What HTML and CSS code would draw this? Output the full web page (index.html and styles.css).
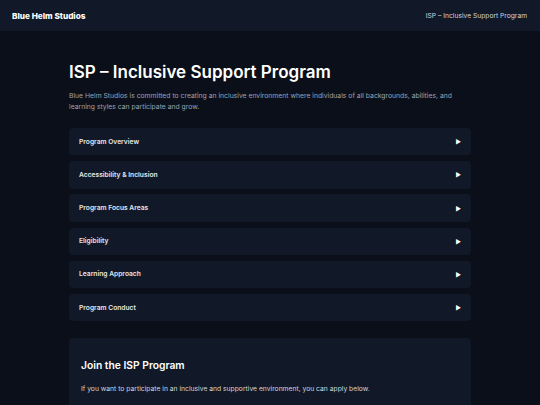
FILE: index.html
```html
<!DOCTYPE html>
<html lang="en">
<head>
  <meta charset="utf-8">
  <title>ISP – Inclusive Support Program</title>
  <link rel="stylesheet" href="styles.css">
</head>
<body>
  <header class="topbar">
    <span class="brand">Blue Helm Studios</span>
    <span class="topbar-title">ISP – Inclusive Support Program</span>
  </header>

  <main class="wrapper">
    <h1 class="page-title">ISP – Inclusive Support Program</h1>
    <p class="intro">Blue Helm Studios is committed to creating an inclusive environment where individuals of all backgrounds, abilities, and learning styles can participate and grow.</p>

    <ul class="sections">
      <li class="section"><span class="section-label">Program Overview</span><span class="arrow">&#9654;</span></li>
      <li class="section"><span class="section-label">Accessibility &amp; Inclusion</span><span class="arrow">&#9654;</span></li>
      <li class="section"><span class="section-label">Program Focus Areas</span><span class="arrow">&#9654;</span></li>
      <li class="section"><span class="section-label">Eligibility</span><span class="arrow">&#9654;</span></li>
      <li class="section"><span class="section-label">Learning Approach</span><span class="arrow">&#9654;</span></li>
      <li class="section"><span class="section-label">Program Conduct</span><span class="arrow">&#9654;</span></li>
    </ul>

    <section class="join">
      <h2 class="join-title">Join the ISP Program</h2>
      <p class="join-text">If you want to participate in an inclusive and supportive environment, you can apply below.</p>
    </section>
  </main>
</body>
</html>
```

FILE: styles.css
```css
html,
body {
  margin: 0;
  padding: 0;
}

body {
  background: #0b0f19;
  color: #e5e7eb;
  font-family: "Inter", "Liberation Sans", sans-serif;
}

.topbar {
  display: flex;
  justify-content: space-between;
  align-items: center;
  height: 31px;
  padding: 0 13px 0 12px;
  background: #111827;
}

.brand {
  font-size: 8.2px;
  font-weight: 800;
  color: #ffffff;
}

.topbar-title {
  font-size: 6.7px;
  color: #d1d5db;
}

.wrapper {
  width: 402px;
  margin: 0 auto;
  padding-top: 30px;
}

.page-title {
  margin: 0;
  font-size: 17px;
  font-weight: 600;
  line-height: 22px;
  color: #ffffff;
}

.intro {
  margin: 7px 0 0;
  font-size: 6.8px;
  line-height: 11px;
  color: #9ca3af;
}

.sections {
  list-style: none;
  margin: 16px 0 0;
  padding: 0;
  display: flex;
  flex-direction: column;
  gap: 5.8px;
}

.section {
  display: flex;
  justify-content: space-between;
  align-items: center;
  height: 27.4px;
  padding: 0 10px;
  background: #111827;
  border-radius: 4px;
}

.section-label {
  font-size: 6.7px;
  font-weight: 600;
  color: #e5e7eb;
}

.arrow {
  font-size: 6px;
  color: #ffffff;
}

.join {
  margin-top: 17px;
  padding: 21px 12px;
  background: #111827;
  border-radius: 4px;
}

.join-title {
  margin: 0;
  font-size: 10.3px;
  font-weight: 600;
  color: #ffffff;
}

.join-text {
  margin: 13px 0 0;
  font-size: 6.75px;
  color: #d1d5db;
}
```
